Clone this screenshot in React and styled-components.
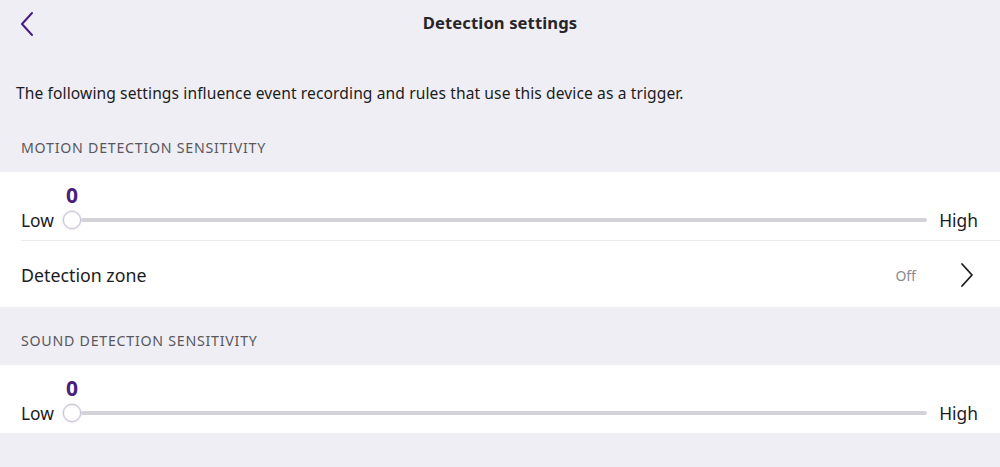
import React from "react";
import styled, { createGlobalStyle } from "styled-components";

const GlobalStyle = createGlobalStyle`
  html, body {
    margin: 0;
    padding: 0;
    background: #efeef4;
    font-family: "Noto Sans", "Open Sans", sans-serif;
    color: #1c1c1e;
  }
`;

const Page = styled.div`
  width: 1000px;
  height: 467px;
  background: #efeef4;
  overflow: hidden;
`;

const Header = styled.header`
  position: relative;
  height: 45px;
  display: flex;
  align-items: center;
  justify-content: center;
`;

const BackButton = styled.button`
  position: absolute;
  left: 14px;
  top: 9px;
  width: 26px;
  height: 30px;
  padding: 0;
  border: 0;
  background: transparent;
  color: #4b1d7d;
  display: flex;
  align-items: center;
  justify-content: center;
`;

const Title = styled.h1`
  margin: 0;
  font-size: 16.6px;
  font-weight: 700;
  letter-spacing: 0.1px;
  color: #26262a;
`;

const Intro = styled.p`
  margin: 0;
  padding: 37px 16px 0;
  height: 43px;
  font-size: 15.6px;
  letter-spacing: 0.1px;
  line-height: 22px;
  color: #1c1c1e;
`;

const SectionTitle = styled.h2`
  margin: 0;
  height: ${(p) => p.$h}px;
  padding: 0 21px;
  display: flex;
  align-items: flex-end;
  box-sizing: border-box;
  padding-bottom: ${(p) => p.$pb}px;
  font-size: 14.2px;
  font-weight: 400;
  letter-spacing: 0.75px;
  color: #58575d;
`;

const Card = styled.section`
  background: #ffffff;
`;

const SliderRow = styled.div`
  height: 68px;
  box-sizing: border-box;
  padding: 12px 22px 0 21px;
  display: grid;
  grid-template-columns: auto 1fr auto;
  grid-template-rows: 22px 28px;
  column-gap: 9px;
  align-items: center;
`;

const Value = styled.span`
  grid-column: 2;
  grid-row: 1;
  width: 18px;
  text-align: center;
  font-size: 21px;
  font-weight: 700;
  line-height: 22px;
  color: #4b1d7d;
`;

const EndLabel = styled.span`
  grid-row: 2;
  font-size: 17.4px;
  color: #1c1c1e;
  margin-left: ${(p) => (p.$right ? "3px" : "0")};
`;

const Track = styled.div`
  grid-row: 2;
  grid-column: 2;
  display: flex;
  align-items: center;
`;

const Thumb = styled.div`
  width: 16px;
  height: 16px;
  border-radius: 50%;
  background: #fff;
  border: 1.5px solid #c7c2d1;
  box-shadow: 0 0 2px rgba(90, 40, 140, 0.35);
  flex: none;
`;

const Rail = styled.div`
  flex: 1;
  height: 4px;
  border-radius: 2px;
  background: #d3d2d8;
`;

const Divider = styled.div`
  height: 1px;
  margin-left: 21px;
  background: #ebebef;
`;

const LinkRow = styled.div`
  height: 66px;
  display: flex;
  align-items: center;
  padding: 2px 26px 0 21px;
  box-sizing: border-box;
`;

const LinkLabel = styled.span`
  flex: 1;
  font-size: 17.8px;
  color: #1c1c1e;
`;

const LinkValue = styled.span`
  font-size: 14px;
  color: #8a898f;
  margin-right: 44px;
`;

const Slider = ({ value }) => (
  <SliderRow>
    <Value>{value}</Value>
    <EndLabel>Low</EndLabel>
    <Track>
      <Thumb />
      <Rail />
    </Track>
    <EndLabel $right>High</EndLabel>
  </SliderRow>
);

export default function App() {
  return (
    <Page>
      <GlobalStyle />
      <Header>
        <BackButton aria-label="Back">
          <svg width="16" height="26" viewBox="0 0 16 26" fill="none">
            <path d="M13 2 L3 13 L13 24" stroke="currentColor" strokeWidth="2" strokeLinecap="round" strokeLinejoin="round" />
          </svg>
        </BackButton>
        <Title>Detection settings</Title>
      </Header>
      <Intro>
        The following settings influence event recording and rules that use this device as a trigger.
      </Intro>
      <SectionTitle $h={47} $pb={15}>MOTION DETECTION SENSITIVITY</SectionTitle>
      <Card>
        <Slider value="0" />
        <Divider />
        <LinkRow>
          <LinkLabel>Detection zone</LinkLabel>
          <LinkValue>Off</LinkValue>
          <svg width="14" height="26" viewBox="0 0 14 26" fill="none">
            <path d="M2 2 L12 13 L2 24" stroke="#1c1c1e" strokeWidth="1.8" strokeLinecap="round" strokeLinejoin="round" />
          </svg>
        </LinkRow>
      </Card>
      <SectionTitle $h={58} $pb={15}>SOUND DETECTION SENSITIVITY</SectionTitle>
      <Card>
        <Slider value="0" />
      </Card>
    </Page>
  );
}
